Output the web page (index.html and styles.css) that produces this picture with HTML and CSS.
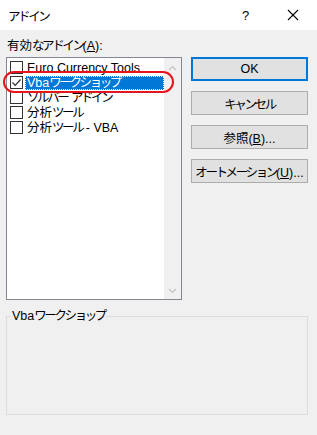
FILE: index.html
```html
<!DOCTYPE html>
<html lang="ja">
<head>
  <meta charset="UTF-8" />
  <title>アドイン</title>
  <link rel="stylesheet" href="styles.css">
</head>
<body>

<div class="titlebar">
  <span class="title"><span class="ja">アドイン</span></span>
  <span class="help">?</span>
  <span class="close">
    <svg width="12" height="12" viewBox="0 0 12 12"><path d="M1 1 L11 11 M11 1 L1 11" stroke="#000" stroke-width="1.1" fill="none"/></svg>
  </span>
</div>

<div class="dialog">
  <div class="caption">有効<span class="ja">なアドイン</span>(<u>A</u>):</div>

  <div class="row">
    <div class="listbox">
      <div class="items">
        <div class="item"><span class="check"></span><span class="text">Euro Currency Tools</span></div>
        <div class="item selected">
          <span class="check"><svg width="11" height="11" viewBox="0 0 11 11"><path d="M1.5 5.5 L4.2 8.3 L9.5 2.5" stroke="#333" stroke-width="1.2" fill="none"/></svg></span>
          <span class="text">Vba<span class="ja">ワークショップ</span></span>
        </div>
        <div class="item"><span class="check"></span><span class="text"><span class="ja">ソルバー</span> <span class="ja">アドイン</span></span></div>
        <div class="item"><span class="check"></span><span class="text">分析<span class="ja">ツール</span></span></div>
        <div class="item"><span class="check"></span><span class="text">分析<span class="ja">ツール</span> - VBA</span></div>
        <div class="marker"></div>
      </div>
      <div class="scrollbar">
        <svg width="9" height="6" viewBox="0 0 9 6"><path d="M1 5 L4.5 1.5 L8 5" stroke="#c2c2c2" stroke-width="1.2" fill="none"/></svg>
        <svg width="9" height="6" viewBox="0 0 9 6"><path d="M1 1 L4.5 4.5 L8 1" stroke="#c2c2c2" stroke-width="1.2" fill="none"/></svg>
      </div>
    </div>

    <div class="buttons">
      <button class="default">OK</button>
      <button><span class="ja">キャンセル</span></button>
      <button>参照(<u>B</u>)...</button>
      <button><span class="ja">オートメーション</span>(<u>U</u>)...</button>
    </div>
  </div>

  <fieldset class="group">
    <legend>Vba<span class="ja">ワークショップ</span></legend>
  </fieldset>
</div>

</body>
</html>
```

FILE: styles.css
```css
body { margin: 0; width: 317px; height: 435px; background: #f0f0f0; font-family: "Liberation Sans", "Noto Sans CJK JP", sans-serif; font-size: 12.5px; color: #000; overflow: hidden; }
u { text-decoration: underline; text-underline-offset: 1px; }
.ja { letter-spacing: -2.4px; }

.titlebar { height: 30px; background: #fff; display: flex; align-items: center; padding-left: 8px; }
.title { flex: 1; }
.help { width: 20px; font-size: 13px; margin-right: 25px; }
.close { width: 30px; display: flex; align-items: center; }

.dialog { padding: 0 9px 0 6px; }
.caption { margin-top: 8px; height: 19px; line-height: 16px; padding-left: 1px; }

.row { display: flex; }
.listbox { width: 174px; height: 241px; border: 1px solid #828790; background: #fff; display: flex; }
.items { flex: 1; position: relative; padding-top: 2px; }
.item { height: 15px; display: flex; align-items: center; padding-left: 3px; }
.check { width: 11px; height: 11px; border: 1px solid #333; background: #fff; display: flex; align-items: center; justify-content: center; flex: none; }
.text { margin-left: 2px; padding: 0 2px; height: 14px; line-height: 14px; white-space: nowrap; }
.item.selected .text { background: #0078d7; color: #fff; flex: 1; outline: 1px dotted #fff; outline-offset: -1px; }
.marker { position: absolute; left: -4px; top: 13px; width: 167px; height: 18px; border: 2px solid #e8141b; border-radius: 11px; }

.scrollbar { width: 17px; background: #f0f0f0; display: flex; flex-direction: column; justify-content: space-between; align-items: center; padding: 7px 0 5px; box-sizing: border-box; }

.buttons { margin-left: 9px; width: 117px; display: flex; flex-direction: column; gap: 10px; }
.buttons button { height: 24px; background: #e1e1e1; border: 1px solid #adadad; font: inherit; color: #000; padding: 0; white-space: nowrap; }
.buttons button.default { border: 2px solid #0078d7; }

.group { margin: 9px 0 0; padding: 0; height: 104px; border: 1px solid #dcdcdc; }
.group legend { padding: 0 1px; margin-left: 4px; line-height: 14px; }
```
